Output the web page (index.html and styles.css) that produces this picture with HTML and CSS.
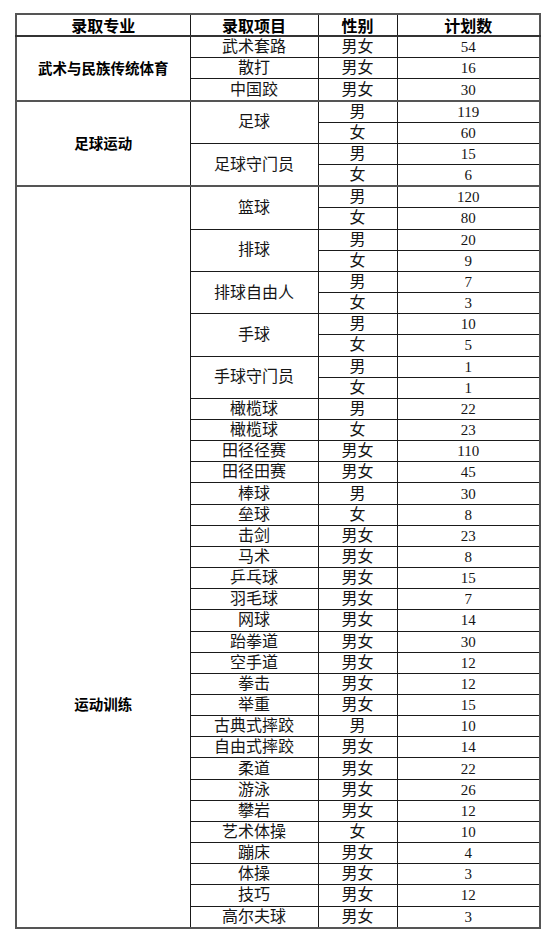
FILE: index.html
```html
<!DOCTYPE html>
<html lang="zh">
<head>
<meta charset="utf-8">
<link rel="stylesheet" href="styles.css">
</head>
<body>
<table class="plan">
<colgroup><col class="c1"><col class="c2"><col class="c3"><col class="c4"></colgroup>
<thead>
<tr><th>录取专业</th><th>录取项目</th><th>性别</th><th>计划数</th></tr>
</thead>
<tbody>
<tr class="grp"><td class="major" rowspan="3">武术与民族传统体育</td><td>武术套路</td><td>男女</td><td class="num">54</td></tr>
<tr><td>散打</td><td>男女</td><td class="num">16</td></tr>
<tr><td>中国跤</td><td>男女</td><td class="num">30</td></tr>
<tr class="grp"><td class="major" rowspan="4">足球运动</td><td rowspan="2">足球</td><td>男</td><td class="num">119</td></tr>
<tr><td>女</td><td class="num">60</td></tr>
<tr><td rowspan="2">足球守门员</td><td>男</td><td class="num">15</td></tr>
<tr><td>女</td><td class="num">6</td></tr>
<tr class="grp"><td class="major major-long" rowspan="35">运动训练</td><td rowspan="2">篮球</td><td>男</td><td class="num">120</td></tr>
<tr><td>女</td><td class="num">80</td></tr>
<tr><td rowspan="2">排球</td><td>男</td><td class="num">20</td></tr>
<tr><td>女</td><td class="num">9</td></tr>
<tr><td rowspan="2">排球自由人</td><td>男</td><td class="num">7</td></tr>
<tr><td>女</td><td class="num">3</td></tr>
<tr><td rowspan="2">手球</td><td>男</td><td class="num">10</td></tr>
<tr><td>女</td><td class="num">5</td></tr>
<tr><td rowspan="2">手球守门员</td><td>男</td><td class="num">1</td></tr>
<tr><td>女</td><td class="num">1</td></tr>
<tr><td>橄榄球</td><td>男</td><td class="num">22</td></tr>
<tr><td>橄榄球</td><td>女</td><td class="num">23</td></tr>
<tr><td>田径径赛</td><td>男女</td><td class="num">110</td></tr>
<tr><td>田径田赛</td><td>男女</td><td class="num">45</td></tr>
<tr><td>棒球</td><td>男</td><td class="num">30</td></tr>
<tr><td>垒球</td><td>女</td><td class="num">8</td></tr>
<tr><td>击剑</td><td>男女</td><td class="num">23</td></tr>
<tr><td>马术</td><td>男女</td><td class="num">8</td></tr>
<tr><td>乒乓球</td><td>男女</td><td class="num">15</td></tr>
<tr><td>羽毛球</td><td>男女</td><td class="num">7</td></tr>
<tr><td>网球</td><td>男女</td><td class="num">14</td></tr>
<tr><td>跆拳道</td><td>男女</td><td class="num">30</td></tr>
<tr><td>空手道</td><td>男女</td><td class="num">12</td></tr>
<tr><td>拳击</td><td>男女</td><td class="num">12</td></tr>
<tr><td>举重</td><td>男女</td><td class="num">15</td></tr>
<tr><td>古典式摔跤</td><td>男</td><td class="num">10</td></tr>
<tr><td>自由式摔跤</td><td>男女</td><td class="num">14</td></tr>
<tr><td>柔道</td><td>男女</td><td class="num">22</td></tr>
<tr><td>游泳</td><td>男女</td><td class="num">26</td></tr>
<tr><td>攀岩</td><td>男女</td><td class="num">12</td></tr>
<tr><td>艺术体操</td><td>女</td><td class="num">10</td></tr>
<tr><td>蹦床</td><td>男女</td><td class="num">4</td></tr>
<tr><td>体操</td><td>男女</td><td class="num">3</td></tr>
<tr><td>技巧</td><td>男女</td><td class="num">12</td></tr>
<tr><td>高尔夫球</td><td>男女</td><td class="num">3</td></tr>
</tbody>
</table>
</body>
</html>
```
FILE: styles.css
```css
html, body {
  margin: 0;
  padding: 0;
  background: #fff;
}
body {
  padding: 13px 0 0 15px;
}
.plan {
  border-collapse: collapse;
  table-layout: fixed;
  width: 524px;
  border: 2px solid #555;
  font-family: "Liberation Serif", "Noto Sans CJK SC", serif;
  color: #151515;
}
.c1 { width: 174px; }
.c2 { width: 128px; }
.c3 { width: 79px; }
.c4 { width: 143px; }
.plan th,
.plan td {
  border: 1px solid #1a1a1a;
  height: 20.17px;
  padding: 0;
  text-align: center;
  vertical-align: middle;
  line-height: 18px;
  font-size: 16px;
  overflow: hidden;
  white-space: nowrap;
}
.plan th {
  font-family: "Noto Sans CJK SC", sans-serif;
  font-weight: 700;
  font-size: 16px;
  color: #000;
  border-bottom: 2px solid #333;
}
.plan td.major {
  font-family: "Noto Sans CJK SC", sans-serif;
  font-weight: 700;
  font-size: 14.5px;
  color: #000;
}
.plan td.major-long {
  padding-top: 294px;
}
.plan td.num {
  font-size: 15px;
}
.plan tr.grp td {
  border-top: 2px solid #555;
}
```
